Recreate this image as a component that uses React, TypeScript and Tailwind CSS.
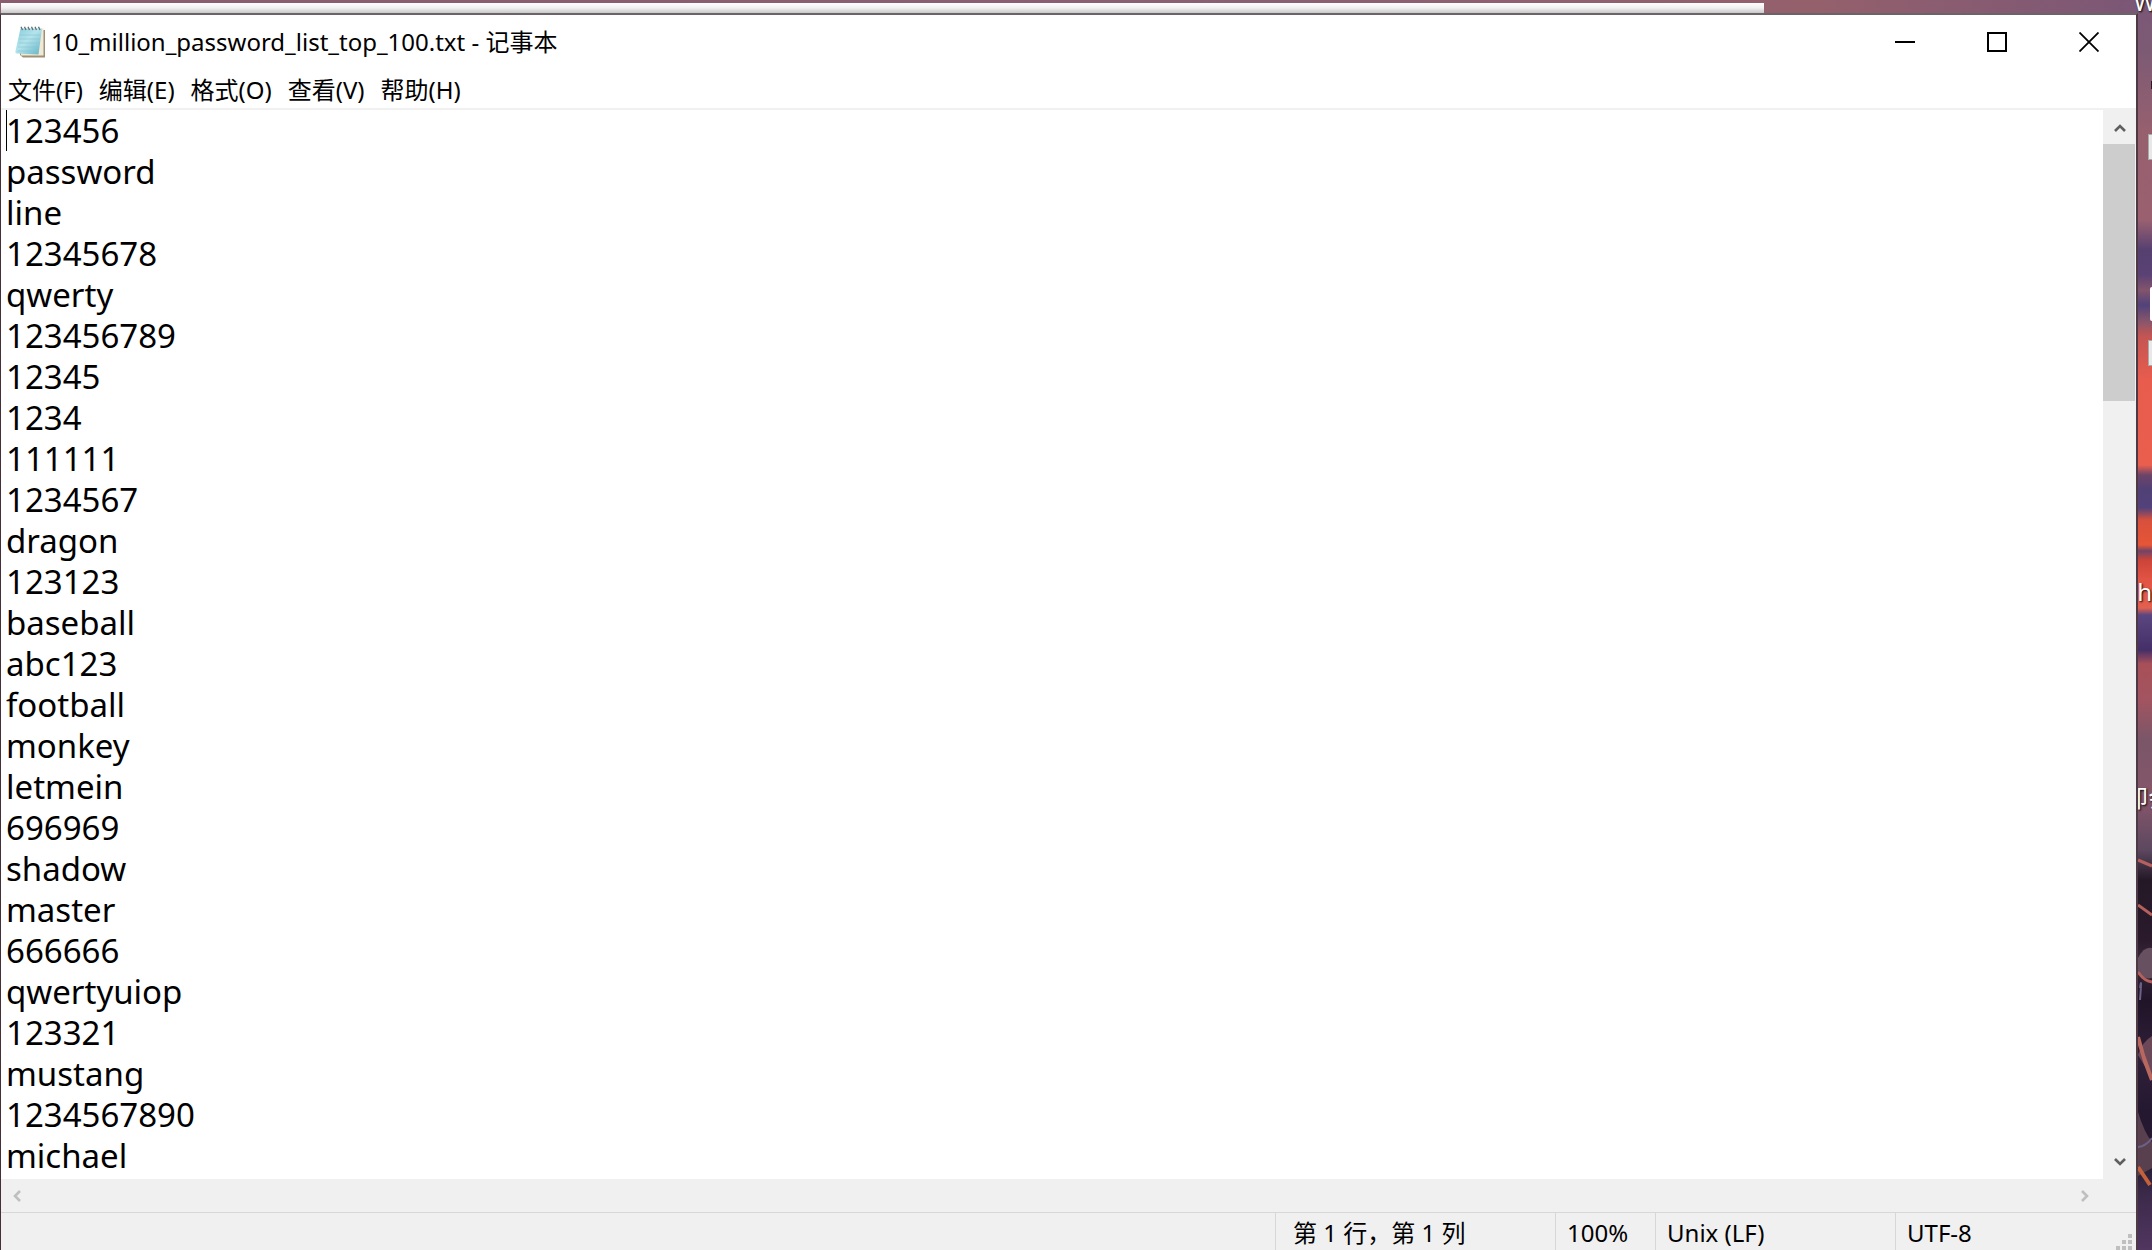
import React from 'react';

const passwords = [
  '123456',
  'password',
  'line',
  '12345678',
  'qwerty',
  '123456789',
  '12345',
  '1234',
  '111111',
  '1234567',
  'dragon',
  '123123',
  'baseball',
  'abc123',
  'football',
  'monkey',
  'letmein',
  '696969',
  'shadow',
  'master',
  '666666',
  'qwertyuiop',
  '123321',
  'mustang',
  '1234567890',
  'michael',
];

const menus = ['文件(F)', '编辑(E)', '格式(O)', '查看(V)', '帮助(H)'];

const NotepadIcon: React.FC = () => (
  <svg className="w-8 h-8 shrink-0" viewBox="0 0 32 32" aria-hidden="true">
    <defs>
      <linearGradient id="cover" x1="0" y1="0" x2="1" y2="1">
        <stop offset="0" stopColor="#86cbda" />
        <stop offset="0.45" stopColor="#b4e4ec" />
        <stop offset="1" stopColor="#62b2c6" />
      </linearGradient>
    </defs>
    <path d="M8 4H31V31.500H9L6 29Z" fill="#9c9174" />
    <path d="M8 2.500H29.500V29.500H7Z" fill="#efe9d6" />
    <path d="M6.500 2.500H28L24.500 28.500L3 27.500Q1 27.500 1.500 25Z" fill="url(#cover)" />
    <path d="M6 9H26.500M5.500 13H26M5 17H25.500M4 21H25M3.500 25H24.500" stroke="#86c3d2" strokeWidth="0.600" />
    <path
      d="M7 0.800L8.500 4M10.500 0.800L12 4M14 0.800L15.500 4M17.500 0.800L19 4M21 0.800L22.500 4M24.500 0.800L26 4"
      stroke="#5f6f74"
      strokeWidth="1.300"
    />
  </svg>
);

const Chevron: React.FC<{ d: string; color: string }> = ({ d, color }) => (
  <svg className="w-3 h-3" viewBox="0 0 12 12" fill="none" stroke={color} strokeWidth="2.600" aria-hidden="true">
    <path d={d} />
  </svg>
);

// Branches in the lower part of the wallpaper
const Branches: React.FC = () => (
  <svg className="absolute right-0 bottom-0 w-[14px] h-[400px]" viewBox="0 0 14 400" fill="none" aria-hidden="true">
    <path d="M0 108Q6 96 14 98V128Q6 130 0 122Z" fill="#67505f" />
    <path d="M0 205Q4 192 14 186V228Z" fill="#6a4858" />
    <path d="M0 262Q6 282 14 292V288V318L0 326Z" fill="#58404f" />
    <path d="M0 10L14 16M0 55L14 65M0 122Q6 131 14 132" stroke="#b4605c" strokeWidth="3" />
    <path d="M0 187Q5 208 14 230" stroke="#b8685e" strokeWidth="4" />
    <path d="M2 138Q4 124 2 150M0 297Q8 296 14 288" stroke="#6c6088" strokeWidth="2" />
    <path d="M0 317L12 335" stroke="#c4603c" strokeWidth="4" />
  </svg>
);

const TitleBar: React.FC = () => (
  <header className="flex items-start bg-white h-14 pr-px">
    <div className="flex items-center gap-1 pl-[13px] pt-[11px] flex-1">
      <NotepadIcon />
      <h1 className="pl-px text-2xl leading-8 whitespace-nowrap">10_million_password_list_top_100.txt - 记事本</h1>
    </div>
    <button aria-label="最小化" className="w-23 h-[54px] flex items-center justify-center">
      <svg className="w-5 h-5" viewBox="0 0 20 20" aria-hidden="true">
        <path d="M0 10H20" stroke="#000" strokeWidth="2" />
      </svg>
    </button>
    <button aria-label="最大化" className="w-23 h-[54px] flex items-center justify-center">
      <svg className="w-5 h-5" viewBox="0 0 20 20" fill="none" aria-hidden="true">
        <path d="M1 1H19V19H1Z" stroke="#000" strokeWidth="2" />
      </svg>
    </button>
    <button aria-label="关闭" className="w-23 h-[54px] flex items-center justify-center">
      <svg className="w-5 h-5" viewBox="0 0 20 20" aria-hidden="true">
        <path d="M0.500 0.500L19.500 19.500M19.500 0.500L0.500 19.500" stroke="#000" strokeWidth="1.800" />
      </svg>
    </button>
  </header>
);

const StatusBar: React.FC = () => (
  <footer className="relative flex h-[38px] bg-[#f0f0f0] border-t border-[#d7d7d7] text-2xl leading-10 whitespace-nowrap">
    <div className="flex-1" />
    <div className="w-[280px] border-l border-[#d7d7d7] pl-[17px]">第 1 行，第 1 列</div>
    <div className="w-[100px] border-l border-[#d7d7d7] pl-[11px]">100%</div>
    <div className="w-[240px] border-l border-[#d7d7d7] pl-[11px]">Unix (LF)</div>
    <div className="w-[241px] border-l border-[#d7d7d7] pl-[11px]">UTF-8</div>
    <svg className="absolute right-1 bottom-0 w-4 h-4" viewBox="0 0 16 16" fill="#bfbfbf" aria-hidden="true">
      <path d="M12 0h4v4h-4zM6 6h4v4h-4zM12 6h4v4h-4zM0 12h4v4h-4zM6 12h4v4h-4zM12 12h4v4h-4z" />
    </svg>
  </footer>
);

const App: React.FC = () => {
  return (
    <div className="relative h-screen overflow-hidden flex flex-col pr-[14px] text-black font-['Noto_Sans','Noto_Sans_CJK_SC',sans-serif] bg-[linear-gradient(180deg,#7b5776_0px,#7c5a74_50px,#96606f_130px,#9a6070_220px,#554070_250px,#5a4274_275px,#84546c_290px,#50427a_305px,#8a566a_322px,#c45552_336px,#e85c4e_380px,#ea5e4e_465px,#6c4468_475px,#4f4076_490px,#53427a_508px,#d8503c_520px,#e65536_545px,#704468_551px,#cc4438_560px,#e25444_580px,#e2604e_608px,#5a4680_615px,#452f68_650px,#a85058_664px,#a25460_700px,#7a5668_740px,#86566a_800px,#5c4860_850px,#241826_880px,#2a1a2c_940px,#3a2838_960px,#201428_1000px,#30203a_1060px,#241830_1110px,#241a30_1160px,#3c2a4a_1195px,#513660_1250px)]">
      {/* Window behind */}
      <div className="h-[13px] pt-[3px] pl-px shrink-0 bg-[linear-gradient(90deg,#8a5c6e,#8a6074_60%,#94606c_85%,#7b5776)]">
        <div className="h-full w-[82.5%] bg-linear-to-b from-white via-[#f0f0f0] to-[#c8c8c8]" />
      </div>

      {/* Desktop icons and labels */}
      <Branches />
      <div className="text-2xl leading-7 text-white text-shadow-[1px_1px_2px_#000]">
        <span className="absolute -right-1 -top-3">W</span>
        <span className="absolute right-0 top-[578px]">h</span>
        <span className="absolute -right-5 top-[784px]">即会</span>
      </div>
      <div className="absolute right-0 top-[134px] w-1 h-[26px] bg-[#e8e8e8] border border-r-0 border-[#aaa]" />
      <div className="absolute right-0 top-[340px] w-1 h-[26px] bg-[#e8e8e8] border border-r-0 border-[#aaa]" />
      <div className="absolute right-0 top-[287px] w-[2px] h-[34px] rounded-l-full bg-white" />
      <div className="absolute right-0 top-[81px] w-px h-2 bg-[#2a1a24]" />

      <main className="relative flex-1 min-h-0 flex flex-col bg-white border-t-2 border-t-[#6a6468] border-l border-l-[#45303a] border-r-2 border-r-[#4e3a44]">
        <TitleBar />
        <nav className="flex items-center gap-4 pl-[7px] h-[39px] border-b-2 border-[#f0f0f0] text-2xl leading-9">
          {menus.map((menu) => (
            <button key={menu} className="whitespace-nowrap">
              {menu}
            </button>
          ))}
        </nav>

        <div className="flex flex-1 min-h-0">
          <textarea
            aria-label="文本编辑器"
            className="flex-1 resize-none overflow-hidden outline-none pl-[5px] text-[33px] leading-[41px] whitespace-pre"
            defaultValue={passwords.join('\n')}
            spellCheck={false}
          />
          <div className="w-[33px] bg-[#f0f0f0] flex flex-col">
            <button aria-label="向上滚动" className="h-[34px] pt-0.5 flex items-center justify-center">
              <Chevron d="M1 9L6 4L11 9" color="#5f5f5f" />
            </button>
            <div className="h-[257px] mr-px bg-[#cdcdcd]" />
            <div className="flex-1" />
            <button aria-label="向下滚动" className="h-[34px] flex items-center justify-center">
              <Chevron d="M1 3L6 8L11 3" color="#5f5f5f" />
            </button>
          </div>
        </div>

        <div className="flex justify-between h-[33px] pr-[33px] bg-[#f0f0f0]">
          <button aria-label="向左滚动" className="w-8 flex items-center justify-center">
            <Chevron d="M9 1L4 6L9 11" color="#bfbfbf" />
          </button>
          <button aria-label="向右滚动" className="w-9 flex items-center justify-center">
            <Chevron d="M3 1L8 6L3 11" color="#bfbfbf" />
          </button>
        </div>
        <StatusBar />

        {/* Text caret */}
        <div className="absolute left-[5px] top-[95px] w-px h-[41px] bg-black" />
      </main>
    </div>
  );
};

export default App;
